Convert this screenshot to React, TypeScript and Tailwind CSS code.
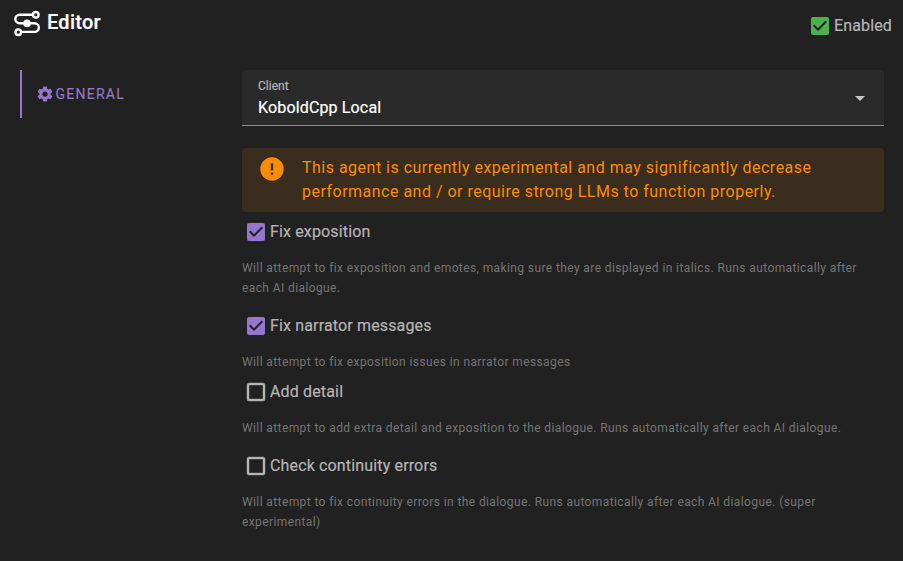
import React from "react";

const COG =
  "M12,15.5A3.5,3.5 0 0,1 8.5,12A3.5,3.5 0 0,1 12,8.5A3.5,3.5 0 0,1 15.5,12A3.5,3.5 0 0,1 12,15.5M19.43,12.97C19.47,12.65 19.5,12.33 19.5,12C19.5,11.67 19.47,11.34 19.43,11L21.54,9.37C21.73,9.22 21.78,8.95 21.66,8.73L19.66,5.27C19.54,5.05 19.27,4.96 19.05,5.05L16.56,6.05C16.04,5.66 15.5,5.32 14.87,5.07L14.5,2.42C14.46,2.18 14.25,2 14,2H10C9.75,2 9.54,2.18 9.5,2.42L9.13,5.07C8.5,5.32 7.96,5.66 7.44,6.05L4.95,5.05C4.73,4.96 4.46,5.05 4.34,5.27L2.34,8.73C2.21,8.95 2.27,9.22 2.46,9.37L4.57,11C4.53,11.34 4.5,11.67 4.5,12C4.5,12.33 4.53,12.65 4.57,12.97L2.46,14.63C2.27,14.78 2.21,15.05 2.34,15.27L4.34,18.73C4.46,18.95 4.73,19.03 4.95,18.95L7.44,17.94C7.96,18.34 8.5,18.68 9.13,18.93L9.5,21.58C9.54,21.82 9.75,22 10,22H14C14.25,22 14.46,21.82 14.5,21.58L14.87,18.93C15.5,18.67 16.04,18.34 16.56,17.94L19.05,18.95C19.27,19.03 19.54,18.95 19.66,18.73L21.66,15.27C21.78,15.05 21.73,14.78 21.54,14.63L19.43,12.97Z";
const CHECKED =
  "M10,17L5,12L6.41,10.58L10,14.17L17.59,6.58L19,8M19,3H5C3.89,3 3,3.89 3,5V19A2,2 0 0,0 5,21H19A2,2 0 0,0 21,19V5C21,3.89 20.1,3 19,3Z";
const UNCHECKED =
  "M19,3H5C3.89,3 3,3.89 3,5V19A2,2 0 0,0 5,21H19A2,2 0 0,0 21,19V5C21,3.89 20.1,3 19,3M19,5V19H5V5H19Z";
const ALERT =
  "M13,13H11V7H13M13,17H11V15H13M12,2A10,10 0 0,0 2,12A10,10 0 0,0 12,22A10,10 0 0,0 22,12A10,10 0 0,0 12,2Z";

function Icon({ path, className }: { path: string; className: string }) {
  return (
    <svg viewBox="0 0 24 24" fill="currentColor" className={`shrink-0 ${className}`}>
      <path d={path} />
    </svg>
  );
}

function RouteIcon() {
  return (
    <svg viewBox="0 0 28 28" className="size-7 shrink-0" fill="none" stroke="currentColor" strokeWidth="2.4">
      <path d="M19.5 5.8H6.5a4.2 4.2 0 0 0 0 8.4h15a4.35 4.35 0 0 1 0 8.7H8.5" />
      <circle cx="22.8" cy="5.8" r="2.8" />
      <circle cx="5.3" cy="23.2" r="2.8" />
      <circle cx="14" cy="14.4" r="3.8" fill="currentColor" stroke="none" />
    </svg>
  );
}

function Check({ label, checked, tone }: { label: string; checked: boolean; tone: string }) {
  return (
    <label className="flex h-6 items-center gap-0.5">
      <Icon path={checked ? CHECKED : UNCHECKED} className={`size-6 ${tone}`} />
      <span className="text-base tracking-[0.15px] text-[#b5b5b5] [-webkit-text-stroke:0.2px]">{label}</span>
    </label>
  );
}

const options = [
  {
    label: "Fix exposition",
    checked: true,
    text: "Will attempt to fix exposition and emotes, making sure they are displayed in italics. Runs automatically after each AI dialogue.",
    space: "pt-2",
  },
  {
    label: "Fix narrator messages",
    checked: true,
    text: "Will attempt to fix exposition issues in narrator messages",
    space: "pt-4",
  },
  {
    label: "Add detail",
    checked: false,
    text: "Will attempt to add extra detail and exposition to the dialogue. Runs automatically after each AI dialogue.",
    space: "pt-2",
  },
  {
    label: "Check continuity errors",
    checked: false,
    text: "Will attempt to fix continuity errors in the dialogue. Runs automatically after each AI dialogue. (super experimental)",
    space: "pt-4",
  },
];

export default function App() {
  return (
    <div className="h-[561px] w-[903px] overflow-hidden bg-[#212121] font-[Roboto,sans-serif] text-white">
      <header className="flex h-[70px] items-start justify-between pl-[13px] pr-[11px]">
        <div className="flex gap-1.5 pt-2">
          <div className="pt-px"><RouteIcon /></div>
          <h1 className="text-xl font-medium leading-7 tracking-[0.25px] [-webkit-text-stroke:0.2px]">Editor</h1>
        </div>
        <div className="pt-3.5">
          <Check label="Enabled" checked tone="text-[#4caf50]" />
        </div>
      </header>
      <div className="flex">
        <nav className="w-[242px] shrink-0 pl-5">
          <div className="flex h-12 items-center border-l-2 border-[#9575cd] pl-3.5 text-[#9575cd]">
            <Icon path={COG} className="size-[18px]" />
            <span className="ml-[1.5px] text-sm tracking-[1.25px] [-webkit-text-stroke:0.15px]">GENERAL</span>
          </div>
        </nav>
        <main className="w-[642px]">
          <div className="flex h-14 items-center justify-between rounded-t border-b border-[#8b8b8b] bg-[#2a2a2a] pl-4 pr-3">
            <div className="pt-0.5">
              <div className="text-xs leading-4 text-[#b5b5b5] [-webkit-text-stroke:0.2px]">Client</div>
              <div className="pt-0.5 text-base leading-6 tracking-[0.15px] [-webkit-text-stroke:0.2px]">KoboldCpp Local</div>
            </div>
            <Icon path="M7,10L12,15L17,10H7Z" className="size-6 text-[#c4c4c4]" />
          </div>
          <div className="mt-[22px] flex h-16 rounded bg-[#3b2d1e] pl-4 pt-2 text-[#fb8c00]">
            <Icon path={ALERT} className="-mt-px size-7" />
            <p className="ml-4 text-base leading-6 tracking-[0.49px]">
              This agent is currently experimental and may significantly decrease
              <br />
              performance and / or require strong LLMs to function properly.
            </p>
          </div>
          {options.map((o) => (
            <section key={o.label} className={o.space}>
              <div className="pl-0.5">
                <Check
                  label={o.label}
                  checked={o.checked}
                  tone={o.checked ? "text-[#9575cd]" : "text-[#b5b5b5] stroke-current stroke-[0.4px]"}
                />
              </div>
              <p className="pt-3.5 text-xs leading-5 tracking-[0.395px] text-[#757575]">{o.text}</p>
            </section>
          ))}
        </main>
      </div>
    </div>
  );
}
